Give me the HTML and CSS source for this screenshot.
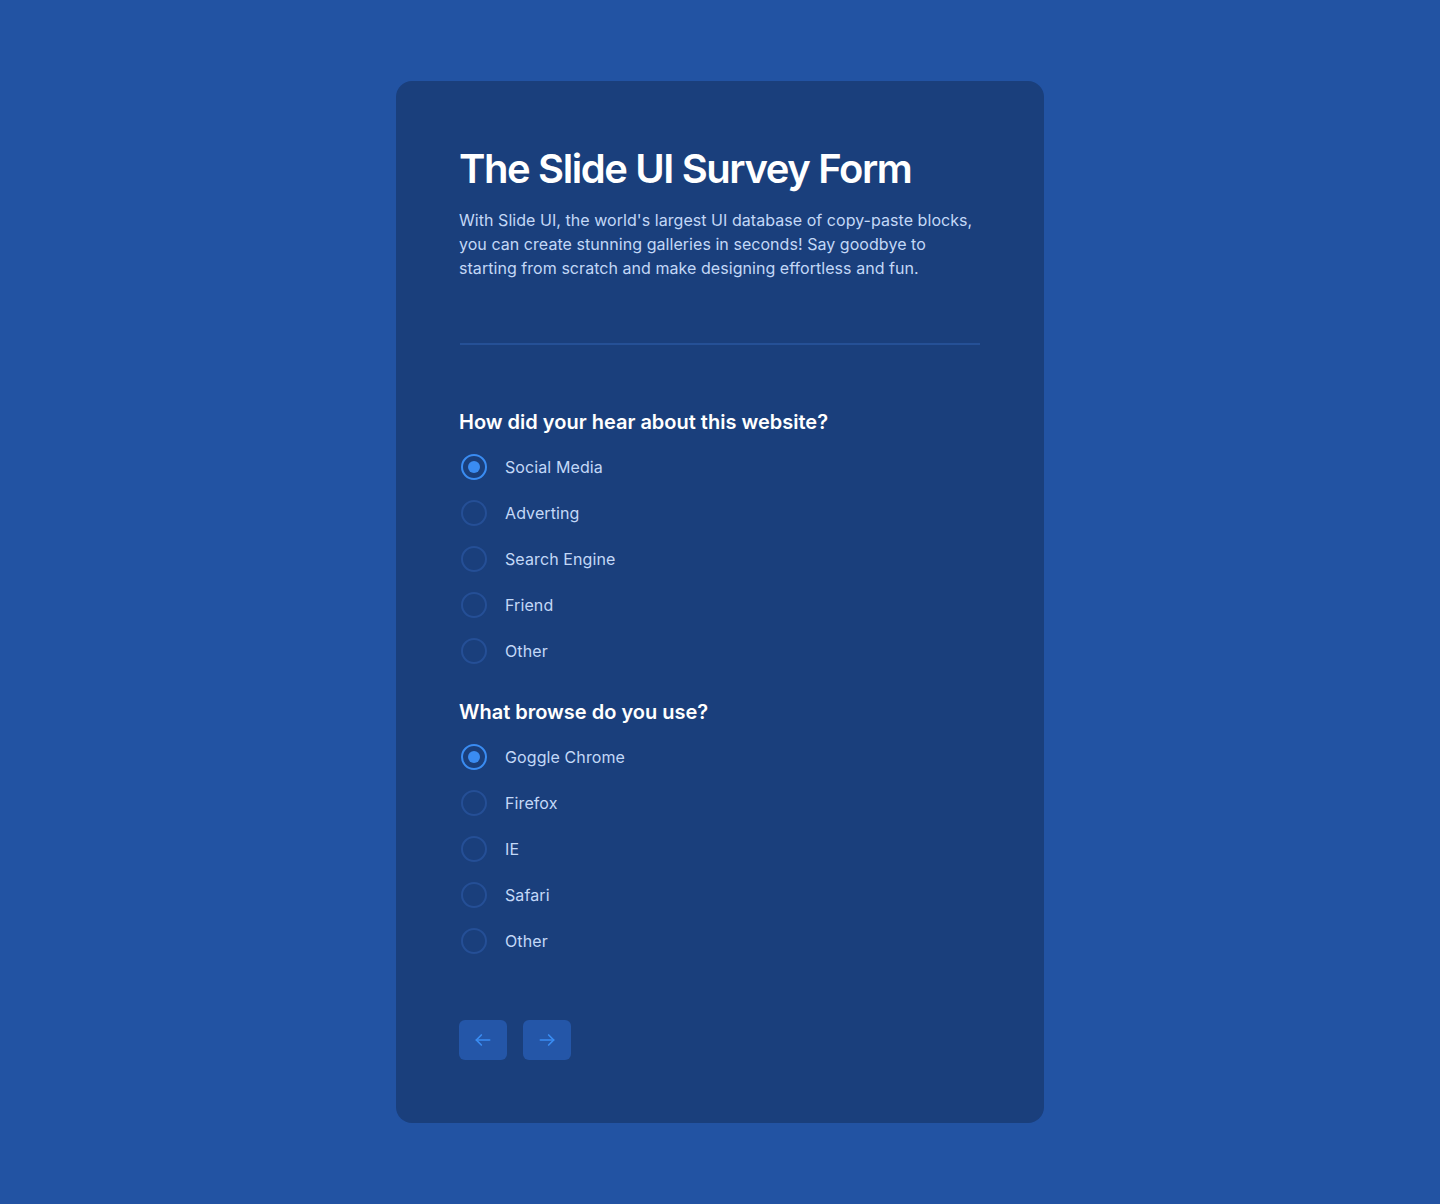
FILE: index.html
```html
<!DOCTYPE html>
<html lang="en">
<head>
<meta charset="utf-8">
<title>The Slide UI Survey Form</title>
<link rel="stylesheet" href="styles.css">
</head>
<body>
<main class="page">
  <section class="card">
    <header class="intro">
      <h1 class="title">The Slide UI Survey Form</h1>
      <p class="lead">With Slide UI, the world's largest UI database of copy-paste blocks, you can create stunning galleries in seconds! Say goodbye to starting from scratch and make designing effortless and fun.</p>
    </header>
    <hr class="divider">
    <div class="questions">
      <fieldset class="question">
        <legend class="q-title">How did your hear about this website?</legend>
        <div class="options">
          <label class="option"><span class="radio checked"></span><span class="opt-label">Social Media</span></label>
          <label class="option"><span class="radio"></span><span class="opt-label">Adverting</span></label>
          <label class="option"><span class="radio"></span><span class="opt-label">Search Engine</span></label>
          <label class="option"><span class="radio"></span><span class="opt-label">Friend</span></label>
          <label class="option"><span class="radio"></span><span class="opt-label">Other</span></label>
        </div>
      </fieldset>
      <fieldset class="question">
        <legend class="q-title">What browse do you use?</legend>
        <div class="options">
          <label class="option"><span class="radio checked"></span><span class="opt-label">Goggle Chrome</span></label>
          <label class="option"><span class="radio"></span><span class="opt-label">Firefox</span></label>
          <label class="option"><span class="radio"></span><span class="opt-label">IE</span></label>
          <label class="option"><span class="radio"></span><span class="opt-label">Safari</span></label>
          <label class="option"><span class="radio"></span><span class="opt-label">Other</span></label>
        </div>
      </fieldset>
    </div>
    <nav class="nav">
      <button class="nav-btn" aria-label="Previous">
        <svg width="20" height="20" viewBox="0 0 24 24" fill="none" stroke="currentColor" stroke-width="2" stroke-linecap="round" stroke-linejoin="round"><path d="M20 12H4"/><path d="M10 6l-6 6 6 6"/></svg>
      </button>
      <button class="nav-btn" aria-label="Next">
        <svg width="20" height="20" viewBox="0 0 24 24" fill="none" stroke="currentColor" stroke-width="2" stroke-linecap="round" stroke-linejoin="round"><path d="M4 12h16"/><path d="M14 6l6 6-6 6"/></svg>
      </button>
    </nav>
  </section>
</main>
</body>
</html>
```

FILE: styles.css
```css
* { box-sizing: border-box; }
html, body { margin: 0; padding: 0; }
body {
  background: #2253a3;
  font-family: Inter, "Noto Sans", "Liberation Sans", sans-serif;
  min-height: 1204px;
}
.page {
  display: flex;
  justify-content: center;
  padding-top: 81px;
}
.card {
  width: 648px;
  background: #1a3f7c;
  border-radius: 16px;
  padding: 64px 64px 63px 63px;
  display: flex;
  flex-direction: column;
}
.title {
  margin: 0;
  font-size: 40px;
  line-height: 48px;
  font-weight: 600;
  letter-spacing: -1.4px;
  color: #ffffff;
}
.lead {
  margin: 15px 0 0;
  font-size: 16px;
  line-height: 24px;
  letter-spacing: 0.05px;
  color: #c3d8f7;
  max-width: 520px;
}
.divider {
  margin: 63px 0 0 1px;
  border: 0;
  height: 2px;
  background: #255096;
  width: 520px;
}
.questions {
  margin-top: 63px;
  display: flex;
  flex-direction: column;
  gap: 34px;
}
.question {
  border: 0;
  margin: 0;
  padding: 0;
  min-width: 0;
}
.q-title {
  padding: 0;
  font-size: 20px;
  line-height: 28px;
  font-weight: 600;
  color: #ffffff;
}
.options {
  margin-top: 18px;
  display: flex;
  flex-direction: column;
  gap: 20px;
}
.option {
  display: flex;
  align-items: center;
  gap: 18px;
  height: 26px;
}
.radio {
  width: 26px;
  height: 26px;
  margin-left: 2px;
  border-radius: 50%;
  border: 2px solid #254f96;
  flex: none;
  display: flex;
  align-items: center;
  justify-content: center;
}
.radio.checked {
  border-color: #3a8cf2;
}
.radio.checked::after {
  content: "";
  width: 12px;
  height: 12px;
  border-radius: 50%;
  background: #3a8cf2;
}
.opt-label {
  font-size: 16px;
  line-height: 24px;
  letter-spacing: 0.1px;
  color: #c3d8f7;
}
.nav {
  margin-top: 66px;
  display: flex;
  gap: 16px;
}
.nav-btn {
  width: 48px;
  height: 40px;
  border: 0;
  border-radius: 6px;
  background: #2456a8;
  color: #3a8cf2;
  display: flex;
  align-items: center;
  justify-content: center;
  padding: 0;
  cursor: pointer;
}
```
